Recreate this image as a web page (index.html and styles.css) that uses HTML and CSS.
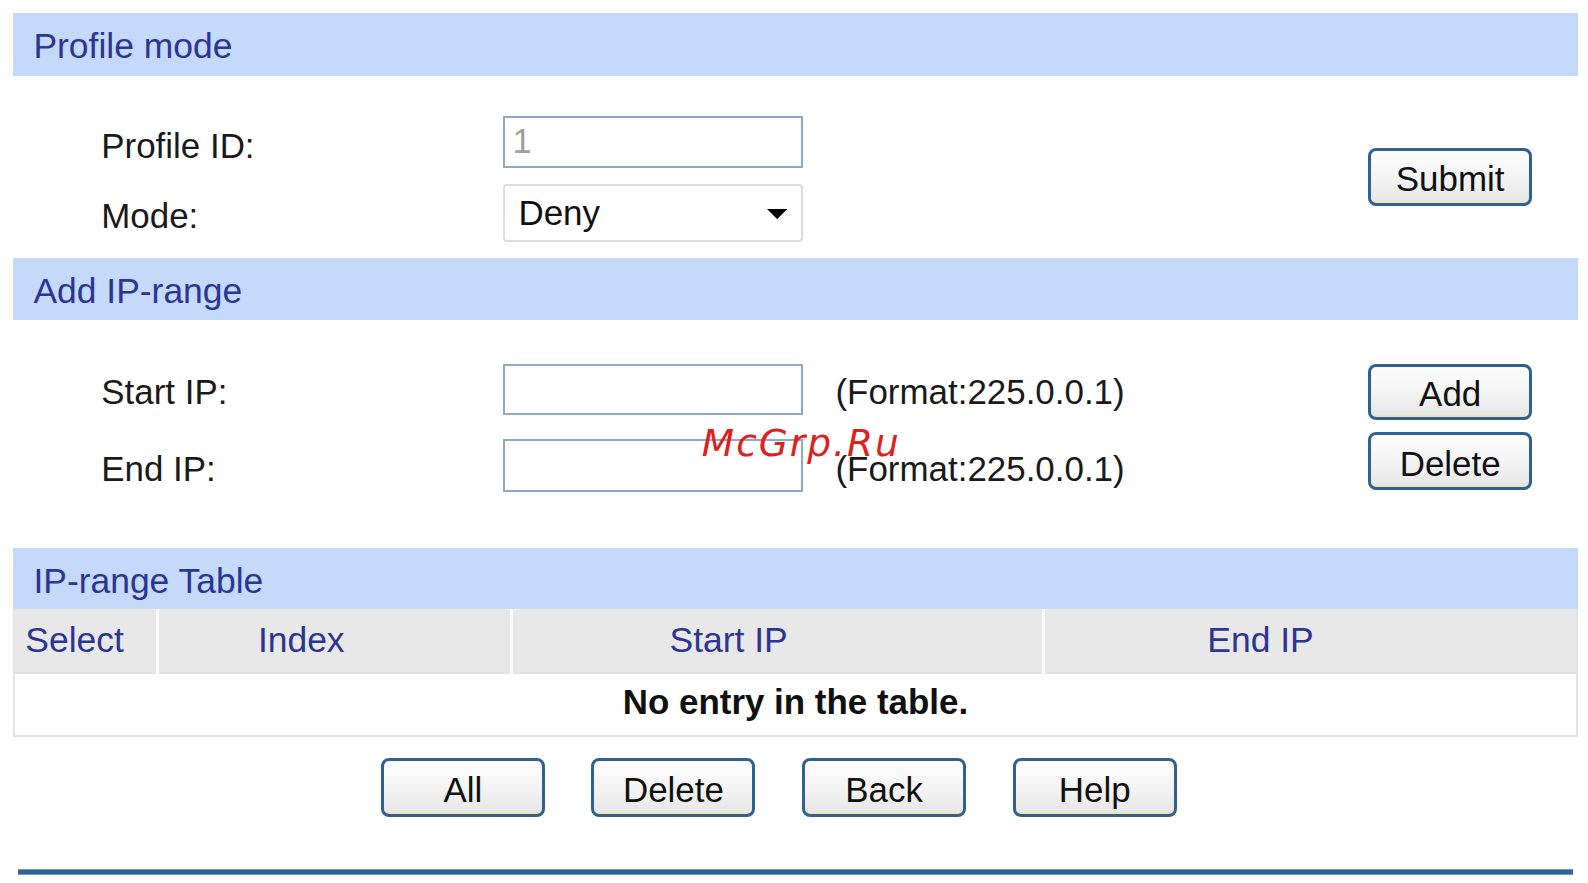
FILE: index.html
```html
<!DOCTYPE html>
<html>
<head>
<meta charset="utf-8">
<title>Profile mode</title>
<link rel="stylesheet" href="styles.css">
</head>
<body>
<div class="page">
  <section class="panel">
    <div class="bar">Profile mode</div>
    <div class="form form-profile">
      <div class="fields">
        <div class="row row-id">
          <span class="label">Profile ID:</span>
          <div class="input input-disabled">1</div>
        </div>
        <div class="row row-mode">
          <span class="label">Mode:</span>
          <div class="select"><span>Deny</span><svg class="caret" width="20" height="10" viewBox="0 0 20 10"><path d="M0 0 L20 0 L10 10 Z" fill="#000"/></svg></div>
        </div>
      </div>
      <div class="actions actions-profile">
        <button class="btn">Submit</button>
      </div>
    </div>
  </section>

  <section class="panel">
    <div class="bar bar-range">Add IP-range</div>
    <div class="form form-range">
      <div class="fields">
        <div class="row row-ip">
          <span class="label">Start IP:</span>
          <div class="input"></div>
          <span class="hint">(Format:225.0.0.1)</span>
        </div>
        <div class="row row-ip row-end">
          <span class="label">End IP:</span>
          <div class="input"></div>
          <span class="hint">(Format:225.0.0.1)</span>
        </div>
      </div>
      <div class="actions actions-range">
        <button class="btn btn-add">Add</button>
        <button class="btn btn-del">Delete</button>
      </div>
    </div>
  </section>

  <section class="panel">
    <div class="bar bar-table">IP-range Table</div>
    <table class="grid">
      <thead>
        <tr>
          <th class="c-select">Select</th>
          <th class="c-index">Index</th>
          <th class="c-start">Start IP</th>
          <th class="c-end">End IP</th>
        </tr>
      </thead>
      <tbody>
        <tr><td colspan="4" class="empty">No entry in the table.</td></tr>
      </tbody>
    </table>
    <div class="bottom-actions">
      <button class="btn">All</button>
      <button class="btn">Delete</button>
      <button class="btn">Back</button>
      <button class="btn">Help</button>
    </div>
  </section>

  <div class="rule"></div>
  <div class="watermark">McGrp.Ru</div>
</div>
</body>
</html>
```

FILE: styles.css
```css
* { box-sizing: border-box; }
html, body { margin: 0; padding: 0; background: #fff; overflow: hidden; }
body {
  font-family: "Liberation Sans", Arial, sans-serif;
  font-size: 34.5px;
  color: #1a1a1a;
}
.page {
  position: relative;
  width: 1588px;
  padding: 13px 30px 0 13px;
  zoom: 1.0127;
}
.bar {
  height: 62px;
  background: #c5d9fb;
  color: #2d3592;
  padding-left: 20px;
  line-height: 67px;
  font-size: 35px;
}
.bar-range { height: 61px; line-height: 66px; }
.bar-table { height: 60px; line-height: 66px; }

.form { display: flex; }
.fields { flex: 1; }
.row { display: flex; align-items: center; }
.label {
  width: 484px;
  padding-left: 87px;
  color: #1a1a1a;
}
.form-profile { padding: 40px 0 16px; }
.row-id { height: 51px; }
.row-id .label { padding-top: 8px; }
.row-mode { height: 57px; margin-top: 16px; }
.row-mode .label { padding-top: 6px; }

.input {
  width: 296px;
  height: 51px;
  border: 2px solid #8ea9c8;
  background: #fff;
  padding-left: 7px;
  line-height: 46px;
  font-size: 34px;
}
.input-disabled { color: #a0a0a0; }

.select {
  width: 296px;
  height: 57px;
  border: 2px solid #dcdcdc;
  border-radius: 4px;
  background: #fff;
  display: flex;
  align-items: center;
  justify-content: space-between;
  padding: 0 14px 0 13px;
  color: #111;
}
.caret { margin-top: 2px; }

.actions {
  width: 207px;
  padding-right: 45px;
  display: flex;
  flex-direction: column;
}
.actions-profile { padding-top: 31px; }

.btn {
  font-family: "Liberation Sans", Arial, sans-serif;
  font-size: 34.5px;
  color: #111;
  width: 162px;
  height: 57px;
  border: 3px solid #2f6192;
  border-radius: 8px;
  background: linear-gradient(#fdfdfd 0%, #f3f3f3 55%, #e6e6e6 100%);
  box-shadow: inset 0 -7px 0 -5px #f1e4b8;
  padding: 5px 0 0;
  margin: 0;
  cursor: pointer;
}

.form-range { padding: 43px 0 55px; }
.row-ip { height: 51px; }
.row-ip .label { padding-top: 6px; }
.row-end { margin-top: 24px; height: 52px; }
.row-end .input { height: 52px; }
.hint { margin-left: 32px; padding-top: 6px; }
.btn-add { height: 56px; }
.btn-del { margin-top: 12px; }

.grid {
  width: 100%;
  border-collapse: collapse;
  border: 2px solid #e4e4e4;
  border-top: 0;
}
.grid th {
  height: 64px;
  background: #e8e8e8;
  color: #2d3592;
  font-weight: normal;
  font-size: 35px;
  border-right: 3px solid #fafafa;
  padding: 0;
  text-align: center;
}
.grid th:last-child { border-right: 0; }
.c-select { width: 142px; text-align: left !important; padding-left: 10px !important; }
.c-index { width: 349px; padding-right: 66px !important; }
.c-start { width: 525px; padding-right: 96px !important; }
.c-end { padding-right: 98px !important; }
.grid td.empty {
  height: 62px;
  padding: 0 0 5px;
  text-align: center;
  font-weight: bold;
  color: #111;
  font-size: 34.5px;
  border-top: 2px solid #e4e4e4;
}

.bottom-actions {
  display: flex;
  gap: 46px;
  padding-left: 363px;
  margin-top: 21px;
}
.bottom-actions .btn { height: 58px; }

.rule {
  margin: 51px 0 0 5px;
  width: 1535px;
  height: 6px;
  background: #2f6698;
  border-top: 1px solid #6d98bf;
  border-bottom: 1px solid #6d98bf;
}

.watermark {
  position: absolute;
  left: 693px;
  top: 416px;
  font-family: "DejaVu Sans", sans-serif;
  font-style: italic;
  font-size: 37px;
  letter-spacing: 2px;
  color: #dd2020;
}
```
